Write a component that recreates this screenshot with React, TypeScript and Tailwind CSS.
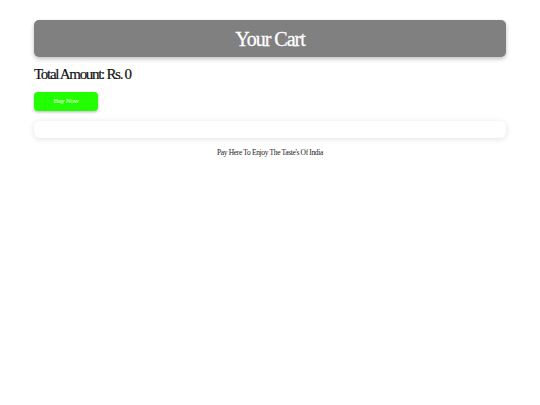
export default function App() {
  return (
    <div className="min-h-screen bg-white font-['Liberation_Serif',serif]">
      <div className="px-[34px] pt-5">
        <div className="flex h-[37px] items-center justify-center rounded-[5px] bg-[#808080] shadow-[0_2px_4px_rgba(0,0,0,0.25)]">
          <h1 className="text-[20px] text-white tracking-[-1px] [-webkit-text-stroke:0.3px_white]">Your Cart</h1>
        </div>
        <h2 className="mt-[8px] text-[15px] leading-[18px] text-[#111] tracking-[-1.3px] [-webkit-text-stroke:0.2px_#111]">
          Total Amount: Rs. 0
        </h2>
        <button className="mt-[9px] flex h-[19px] w-16 items-center justify-center rounded-[4px] bg-[#22ff00] text-[7px] text-white tracking-[-0.3px] shadow-[0_1px_3px_rgba(0,0,0,0.3)]">
          Buy Now
        </button>
        <div className="mt-[10px] h-[17px] rounded-[6px] bg-white shadow-[0_1px_6px_rgba(0,0,0,0.12)]"></div>
        <p className="mt-[9px] text-center text-[7.5px] text-[#222] tracking-[-0.35px]">
          Pay Here To Enjoy The Taste's Of India
        </p>
      </div>
    </div>
  );
}
